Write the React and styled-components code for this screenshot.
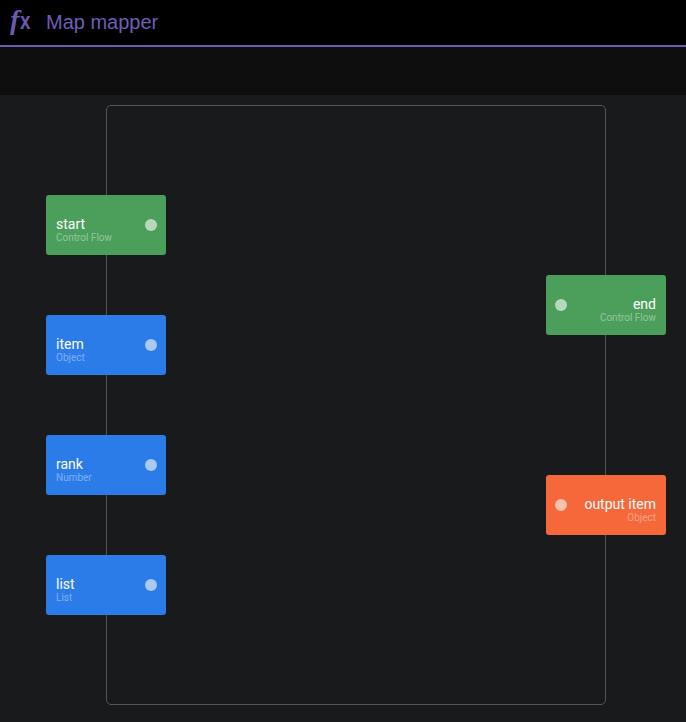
import React from 'react';
import styled, { createGlobalStyle } from 'styled-components';

const nodes = [
  { id: 'start', label: 'start', type: 'Control Flow', color: '#4b9f5b', side: 'in', top: 90 },
  { id: 'item', label: 'item', type: 'Object', color: '#2b7ce9', side: 'in', top: 210 },
  { id: 'rank', label: 'rank', type: 'Number', color: '#2b7ce9', side: 'in', top: 330 },
  { id: 'list', label: 'list', type: 'List', color: '#2b7ce9', side: 'in', top: 450 },
  { id: 'end', label: 'end', type: 'Control Flow', color: '#4b9f5b', side: 'out', top: 170 },
  { id: 'output', label: 'output item', type: 'Object', color: '#f66839', side: 'out', top: 370 },
];

export default function App() {
  return (
    <Page>
      <GlobalStyle />
      <Header>
        <Logo>
          <LogoF>f</LogoF>
          <LogoX>x</LogoX>
        </Logo>
        <Title>Map mapper</Title>
      </Header>
      <Toolbar />
      <Canvas>
        <Frame>
          {nodes.map((node) => (
            <Node key={node.id} $color={node.color} $side={node.side} $top={node.top}>
              <NodeText $side={node.side}>
                <NodeLabel>{node.label}</NodeLabel>
                <NodeType>{node.type}</NodeType>
              </NodeText>
              <Port />
            </Node>
          ))}
        </Frame>
      </Canvas>
    </Page>
  );
}

const GlobalStyle = createGlobalStyle`
  html, body {
    margin: 0;
    padding: 0;
    height: 100%;
    background: #191a1c;
  }
`;

const Page = styled.div`
  width: 686px;
  height: 722px;
  overflow: hidden;
  display: flex;
  flex-direction: column;
  font-family: Roboto, sans-serif;
`;

const Header = styled.header`
  height: 45px;
  flex-shrink: 0;
  display: flex;
  align-items: center;
  gap: 13px;
  padding-left: 10px;
  background: #000;
  border-bottom: 2px solid #6a5ab0;
  box-sizing: content-box;
`;

const Logo = styled.span`
  width: 23px;
  display: flex;
  align-items: baseline;
  line-height: 1;
  color: #6a5ab0;
  font-weight: 700;
`;

const LogoF = styled.span`
  font-family: "Liberation Serif", serif;
  font-size: 28px;
  font-style: italic;
  transform: translateY(-3px);
`;

const LogoX = styled.span`
  margin-left: 1px;
  font-family: "Liberation Sans", Arial, sans-serif;
  font-size: 23px;
  transform: translateY(-3px) scaleX(0.82);
  transform-origin: left center;
`;

const Title = styled.h1`
  margin: 0;
  font-family: "Liberation Sans", Arial, sans-serif;
  font-size: 20px;
  font-weight: 400;
  color: #6e5eb8;
`;

const Toolbar = styled.div`
  height: 48px;
  flex-shrink: 0;
  background: #0e0e0e;
`;

const Canvas = styled.main`
  flex: 1;
  padding: 10px 0 0 106px;
  background: #191a1c;
`;

const Frame = styled.div`
  position: relative;
  width: 500px;
  height: 600px;
  box-sizing: border-box;
  border: 1px solid #555;
  border-radius: 5px;
`;

const Node = styled.div`
  position: absolute;
  top: ${(props) => props.$top - 1}px;
  ${(props) => (props.$side === 'in' ? 'left: -61px;' : 'right: -61px;')}
  width: 120px;
  height: 60px;
  box-sizing: border-box;
  display: flex;
  flex-direction: ${(props) => (props.$side === 'in' ? 'row' : 'row-reverse')};
  align-items: center;
  justify-content: space-between;
  padding: 0 9px 0 10px;
  ${(props) => props.$side === 'out' && 'padding: 0 10px 0 9px;'}
  border-radius: 3px;
  background: ${(props) => props.$color};
`;

const NodeText = styled.div`
  display: flex;
  flex-direction: column;
  padding-top: 8px;
  text-align: ${(props) => (props.$side === 'in' ? 'left' : 'right')};
`;

const NodeLabel = styled.span`
  font-size: 14px;
  line-height: 16px;
  color: #fff;
`;

const NodeType = styled.span`
  font-size: 10px;
  line-height: 11px;
  color: rgba(255, 255, 255, 0.4);
`;

const Port = styled.span`
  width: 12px;
  height: 12px;
  flex-shrink: 0;
  border-radius: 50%;
  background: rgba(255, 255, 255, 0.6);
`;
